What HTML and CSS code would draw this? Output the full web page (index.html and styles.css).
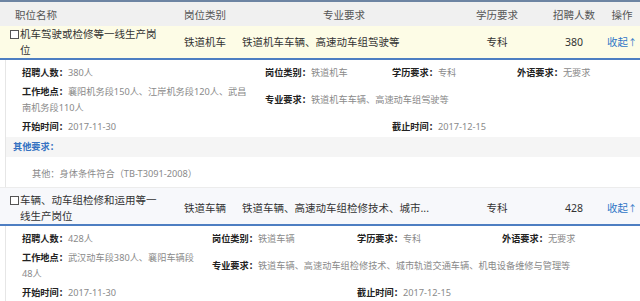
FILE: index.html
```html
<!DOCTYPE html>
<html lang="zh-CN">
<head>
<meta charset="utf-8">
<title>职位列表</title>
<link rel="stylesheet" href="styles.css">
</head>
<body>
<div class="list">
  <div class="thead cols">
    <div class="th th-name">职位名称</div>
    <div class="th th-type">岗位类别</div>
    <div class="th th-center">专业要求</div>
    <div class="th th-center">学历要求</div>
    <div class="th th-center">招聘人数</div>
    <div class="th th-center">操作</div>
  </div>

  <div class="row row-active cols">
    <div class="cell cell-name"><span class="check"></span><span class="name-text">机车驾驶或检修等一线生产岗位</span></div>
    <div class="cell cell-type">铁道机车</div>
    <div class="cell cell-major">铁道机车车辆、高速动车组驾驶等</div>
    <div class="cell cell-center">专科</div>
    <div class="cell cell-center">380</div>
    <div class="cell cell-center"><a class="toggle">收起<span class="arrow">↑</span></a></div>
  </div>

  <div class="detail">
    <div class="dgrid dgrid-a">
      <div class="item c1"><b>招聘人数：</b>380人</div>
      <div class="item c2"><b>岗位类别：</b>铁道机车</div>
      <div class="item c3"><b>学历要求：</b>专科</div>
      <div class="item c4"><b>外语要求：</b>无要求</div>
      <div class="item c1"><b>工作地点：</b>襄阳机务段150人、江岸机务段120人、武昌南机务段110人</div>
      <div class="item c2 span3"><b>专业要求：</b>铁道机车车辆、高速动车组驾驶等</div>
      <div class="item c1"><b>开始时间：</b>2017-11-30</div>
      <div class="item c3"><b>截止时间：</b>2017-12-15</div>
    </div>
    <div class="other-title">其他要求：</div>
    <div class="other-text">其他：身体条件符合（TB-T3091-2008）</div>
  </div>

  <div class="row row-second cols">
    <div class="cell cell-name"><span class="check"></span><span class="name-text">车辆、动车组检修和运用等一线生产岗位</span></div>
    <div class="cell cell-type">铁道车辆</div>
    <div class="cell cell-major">铁道车辆、高速动车组检修技术、城市...</div>
    <div class="cell cell-center">专科</div>
    <div class="cell cell-center">428</div>
    <div class="cell cell-center"><a class="toggle">收起<span class="arrow">↑</span></a></div>
  </div>

  <div class="detail">
    <div class="dgrid dgrid-b">
      <div class="item c1"><b>招聘人数：</b>428人</div>
      <div class="item c2"><b>岗位类别：</b>铁道车辆</div>
      <div class="item c3"><b>学历要求：</b>专科</div>
      <div class="item c4"><b>外语要求：</b>无要求</div>
      <div class="item c1"><b>工作地点：</b>武汉动车段380人、襄阳车辆段48人</div>
      <div class="item c2 span3"><b>专业要求：</b>铁道车辆、高速动车组检修技术、城市轨道交通车辆、机电设备维修与管理等</div>
      <div class="item c1"><b>开始时间：</b>2017-11-30</div>
      <div class="item c3"><b>截止时间：</b>2017-12-15</div>
    </div>
  </div>
</div>
</body>
</html>
```

FILE: styles.css
```css
html, body {
  margin: 0;
  padding: 0;
  background: #ffffff;
}

body {
  font-family: "Noto Sans", "Noto Sans CJK SC", sans-serif;
  color: #333333;
  width: 640px;
  overflow: hidden;
}

.list {
  width: 640px;
}

.cols {
  display: grid;
  grid-template-columns: 176px 62px 212px 94px 60px 36px;
}

.thead {
  border-top: 2px solid #6d84a3;
  background: #f0f0f0;
  height: 24px;
  align-items: center;
  font-size: 10.5px;
  color: #555555;
}

.th-name {
  padding-left: 15px;
}

.th-type {
  padding-left: 8px;
}

.th-center {
  text-align: center;
}

.row {
  font-size: 10.5px;
  line-height: 16px;
  align-items: center;
  border-bottom: 2px solid #4d7ec2;
}

.row-active {
  background: #fdfce6;
}

.row-second {
  background: #f7f8fb;
  border-top: 1px solid #ececec;
  padding-top: 4px;
}

.cell-name {
  display: flex;
  align-items: flex-start;
  padding-left: 10px;
  padding-right: 13px;
}

.check {
  flex: none;
  width: 7px;
  height: 7px;
  border: 1px solid #555555;
  margin-top: 4px;
  margin-right: 1px;
  background: #ffffff;
}

.cell-type {
  padding-left: 8px;
  white-space: nowrap;
}

.cell-major {
  padding-left: 4px;
  white-space: nowrap;
}

.cell-center {
  text-align: center;
  white-space: nowrap;
}

.toggle {
  color: #2f76c6;
  cursor: pointer;
}

.arrow {
  font-size: 9px;
}

.detail {
  margin-left: 5px;
  border-left: 1px solid #e6e6e6;
  padding-top: 5px;
  padding-bottom: 5px;
}

.dgrid {
  display: grid;
  row-gap: 3px;
  padding-left: 16px;
  font-size: 9.2px;
  line-height: 16px;
  color: #8a8a8a;
  align-items: center;
}

.dgrid-a {
  grid-template-columns: 243px 127px 125px 1fr;
}

.dgrid-b {
  grid-template-columns: 190px 145px 145px 1fr;
}

.item {
  padding-right: 10px;
}

.item b {
  color: #222222;
  font-weight: 700;
}

.c1 { grid-column: 1; }
.c2 { grid-column: 2; }
.c3 { grid-column: 3; }
.c4 { grid-column: 4; }
.span3 { grid-column: 2 / span 3; }

.other-title {
  margin-top: 2px;
  background: #f5f5f5;
  height: 20px;
  line-height: 20px;
  padding-left: 7px;
  font-size: 9.2px;
  font-weight: 700;
  color: #3673c2;
}

.other-text {
  margin-top: 9px;
  padding-left: 26px;
  font-size: 9.2px;
  line-height: 16px;
  color: #8a8a8a;
}
```
